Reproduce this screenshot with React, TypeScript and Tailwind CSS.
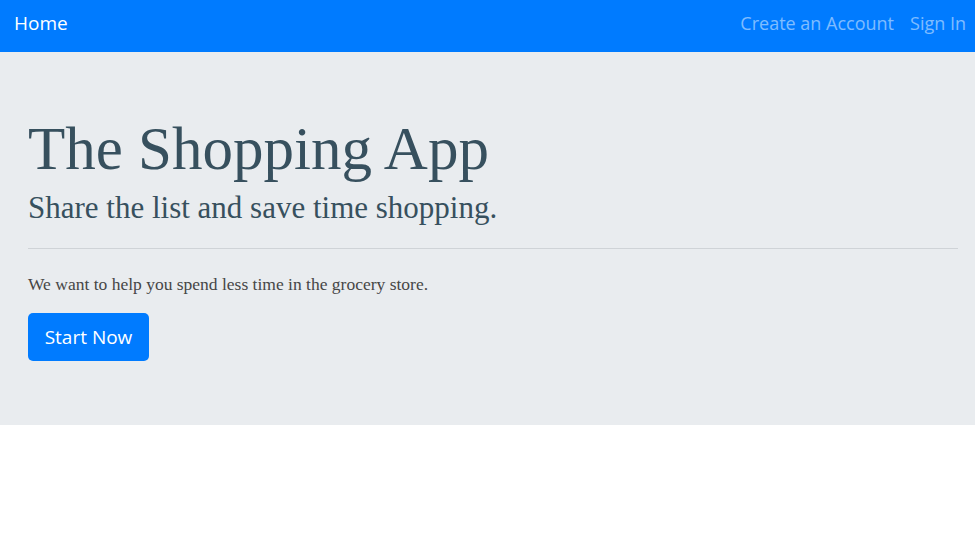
import React from "react";

const sans = { fontFamily: '"Open Sans", "Noto Sans", sans-serif' };
const serif = { fontFamily: '"Liberation Serif", "DejaVu Serif", serif' };

export default function App() {
  return (
    <div className="w-[975px] h-[548px] bg-white">
      <nav className="h-[52px] bg-[#007bff] flex items-center justify-between pl-[14px] pr-[9px] pb-[5px]" style={sans}>
        <span className="text-white text-[19px] leading-none">Home</span>
        <div className="flex items-center gap-[16px] text-[18px] leading-none text-white/50 mb-[1px]">
          <span>Create an Account</span>
          <span>Sign In</span>
        </div>
      </nav>
      <section className="h-[373px] bg-[#e9ecef] pl-[28px] pr-[17px] pt-[64px]">
        <h1 className="text-[61px] leading-[66px] text-[#37505e]" style={serif}>The Shopping App</h1>
        <p className="mt-[8px] text-[31px] leading-[36px] text-[#37505e]" style={serif}>Share the list and save time shopping.</p>
        <hr className="mt-[22px] border-t border-[#cfd3d7]" />
        <p className="mt-[23px] text-[17.5px] leading-[24px] text-[#464646]" style={serif}>We want to help you spend less time in the grocery store.</p>
        <button className="mt-[17px] h-[48px] w-[121px] rounded-[5px] bg-[#007bff] text-white text-[19px]" style={sans}>Start Now</button>
      </section>
    </div>
  );
}
